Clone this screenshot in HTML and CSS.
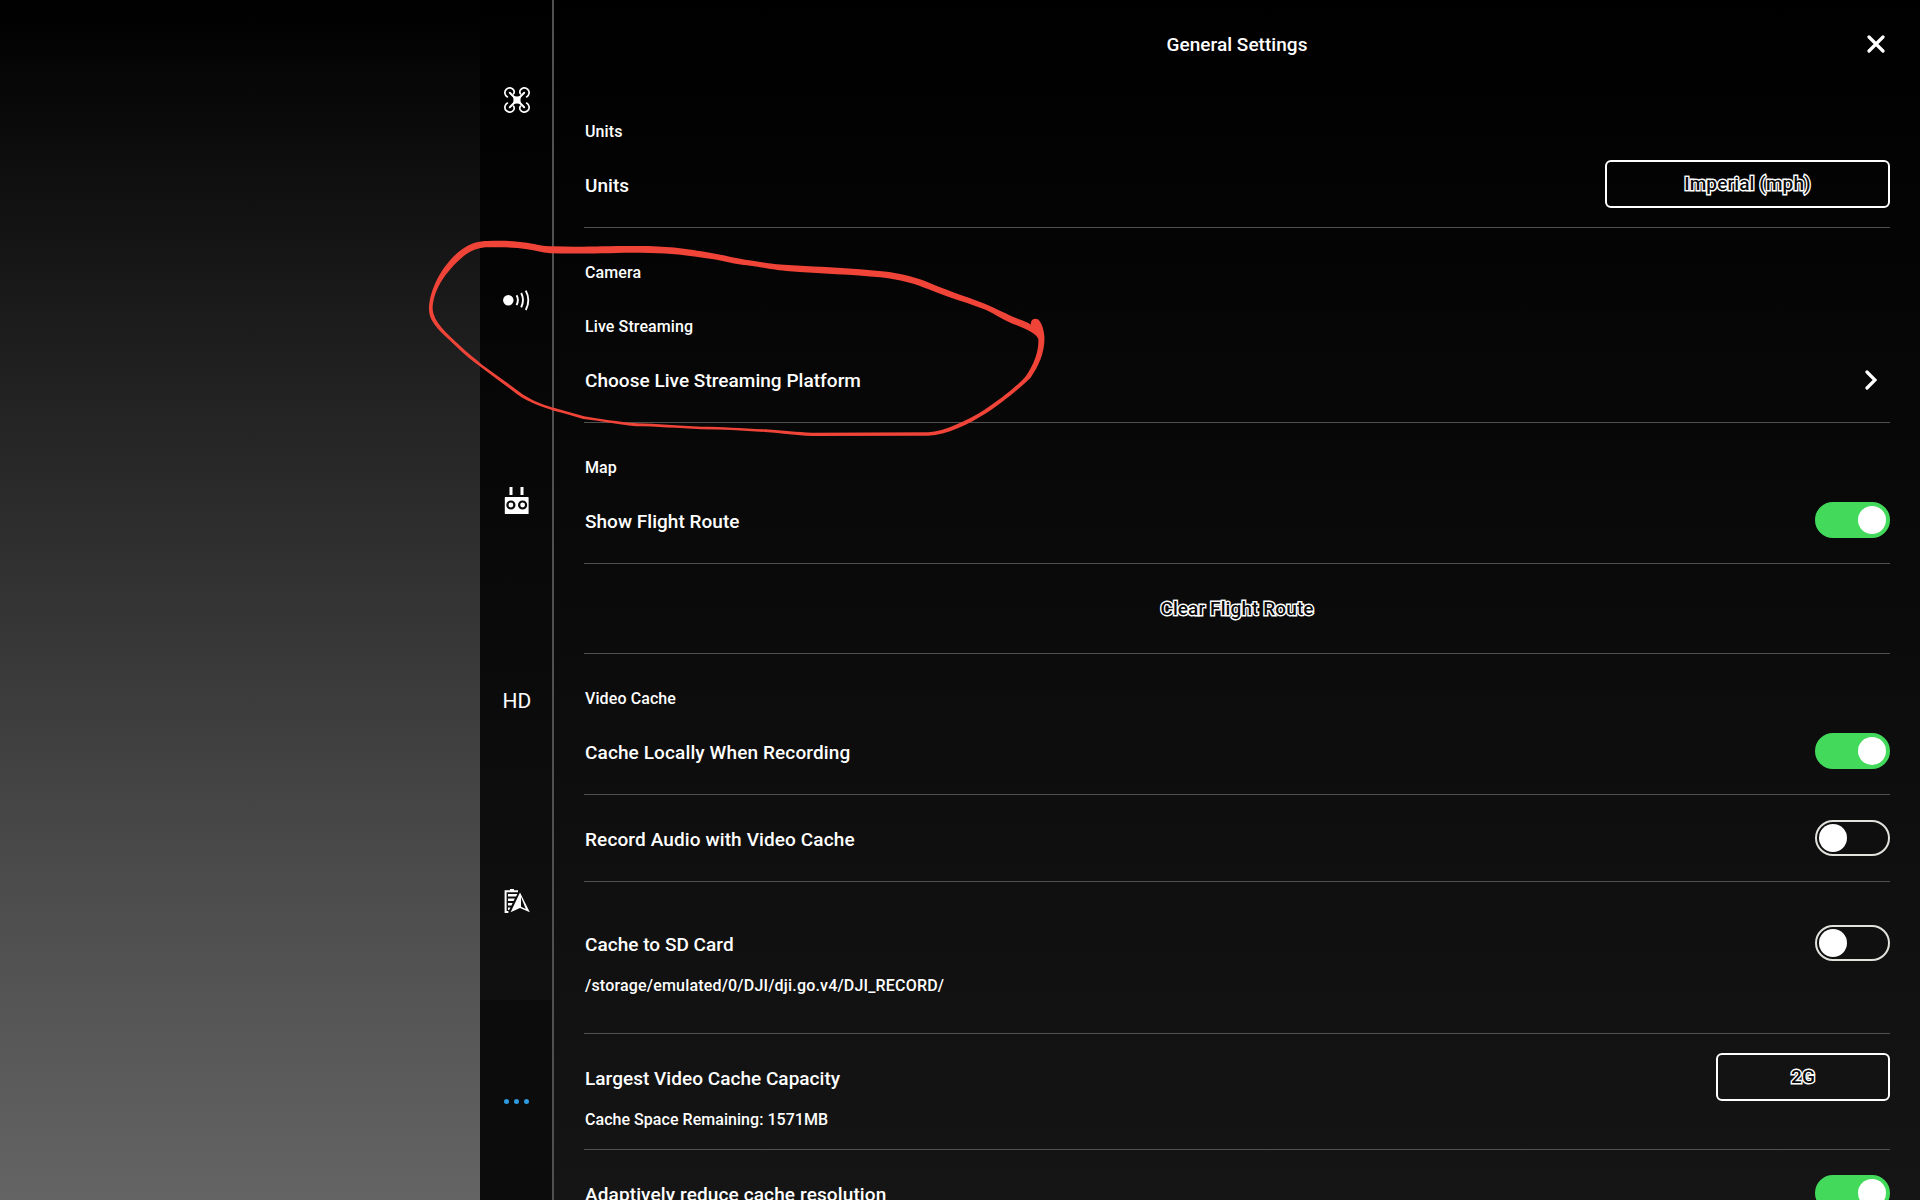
FILE: index.html
```
<!DOCTYPE html>
<html lang="en">
<head>
    <meta charset="UTF-8">
    <title>General Settings</title>
    <link rel="stylesheet" href="styles.css">
</head>
<body>
    <div id="container">
        <ul id="tab">
            <li>
                <svg width="28" height="28" viewBox="0 0 28 28">
                    <g fill="none" stroke="#fff" stroke-width="1.7" stroke-linecap="round">
                        <path d="M4.400 10.900A4.800 4.800 0 1 1 10.900 4.400Q11.600 6.600 10.600 7.800M17.400 7.800Q16.400 6.600 17.100 4.400A4.800 4.800 0 1 1 23.600 10.900M10.600 20.200Q11.600 21.400 10.900 23.600A4.800 4.800 0 1 1 4.400 17.100M23.600 17.100A4.800 4.800 0 1 1 17.100 23.600Q16.400 21.400 17.400 20.200"/>
                        <path d="M6.800 6.800L21.200 21.200M21.200 6.800L6.800 21.200" stroke-width="2"/>
                    </g>
                    <path d="M9.500 9.500Q14 11.500 18.500 9.500Q16.500 14 18.500 18.500Q14 16.500 9.500 18.500Q11.500 14 9.500 9.500Z" fill="#fff"/>
                </svg>
            </li>
            <li>
                <svg width="28" height="28" viewBox="0 0 28 28">
                    <circle cx="5.3" cy="14.3" r="5.2" fill="#fff"/>
                    <path d="M13.6 9.2Q16.2 14 13.6 19.2M18.2 7Q21.8 14 18.2 21.4M22.8 4.6Q27.8 14 22.8 24" fill="none" stroke="#fff" stroke-width="1.9"/>
                </svg>
            </li>
            <li>
                <svg width="28" height="28" viewBox="0 0 28 28">
                    <path d="M6.500 1h3v8h-3zM17.500 1h3v8h-3zM2.400 11h22.600q.6 0 .6.6v15.800q0 .6-.6.6H2.400q-.6 0-.6-.6V11.600q0-.6.6-.6z" fill="#fff"/>
                    <circle cx="7.900" cy="19" r="3.500" fill="#fff" stroke="#090909" stroke-width="2.200"/>
                    <circle cx="19.600" cy="19" r="3.500" fill="#fff" stroke="#090909" stroke-width="2.200"/>
                </svg>
            </li>
            <li class="hd">HD</li>
            <li>
                <svg width="28" height="28" viewBox="0 0 28 28">
                    <path d="M5.400 26H2.600V5.200H15" fill="none" stroke="#fff" stroke-width="2"/>
                    <path d="M7 3h4v3H7zM5 8h9.400l-1.400 2.600H5zM5 12.500h6.800l-1.200 2.600H5zM5 17h4.600l-1.200 2.600H5zM5 21.500h2.400l-1.200 2.400H5z" fill="#fff"/>
                    <path d="M17 6.500L7.600 26.200l9.400-4.200 9.800 4.200z" fill="#fff"/>
                    <path d="M18 11v9.700l4.800 2.300z" fill="#0f0f0f"/>
                </svg>
            </li>
            <li class="selected">
                <i></i><i></i><i></i>
            </li>
        </ul>
        <div id="panel">
            <div class="header">
                <h1>General Settings</h1>
                <svg class="close" width="18" height="18" viewBox="0 0 18 18">
                    <path d="M2 2L16 16M16 2L2 16" stroke="#fff" stroke-width="3.200" stroke-linecap="round"/>
                </svg>
            </div>

            <h2>Units</h2>
            <div class="row">
                <span class="name">Units</span>
                <span class="select wide">Imperial (mph)</span>
            </div>

            <h2>Camera</h2>
            <h2>Live Streaming</h2>
            <div class="row">
                <span class="name">Choose Live Streaming Platform</span>
                <svg class="arrow" width="12" height="20" viewBox="0 0 12 20">
                    <path d="M2 2L10 10L2 18" fill="none" stroke="#fff" stroke-width="3.200" stroke-linecap="round"/>
                </svg>
            </div>

            <h2>Map</h2>
            <div class="row">
                <span class="name">Show Flight Route</span>
                <span class="switch on"></span>
            </div>
            <div class="row clear">
                <span class="outline">Clear Flight Route</span>
            </div>

            <h2>Video Cache</h2>
            <div class="row">
                <span class="name loose">Cache Locally When Recording</span>
                <span class="switch on"></span>
            </div>
            <div class="row">
                <span class="name loose">Record Audio with Video Cache</span>
                <span class="switch"></span>
            </div>
            <div class="row sd">
                <div class="text">
                    <span class="name">Cache to SD Card</span>
                    <span class="info path">/storage/emulated/0/DJI/dji.go.v4/DJI_RECORD/</span>
                </div>
                <span class="switch"></span>
            </div>
            <div class="row capacity">
                <div class="text">
                    <span class="name">Largest Video Cache Capacity</span>
                    <span class="info">Cache Space Remaining: 1571MB</span>
                </div>
                <span class="select">2G</span>
            </div>
            <div class="row">
                <span class="name loose">Adaptively reduce cache resolution</span>
                <span class="switch on"></span>
            </div>
        </div>
        <!-- hand drawn circle round the live streaming row -->
        <svg id="mark" width="640" height="230" viewBox="0 0 1568 690" preserveAspectRatio="none">
            <path fill="#f04438" fill-rule="evenodd" d="M22,268 C22,215 50,140 98,92 C125,68 145,63 165,63 C205,61 235,63 262,68 C290,74 300,78 325,79 C395,82 450,78 520,78 C600,77 640,84 700,96 C740,104 770,114 797,119 C850,128 860,132 902,135 C990,141 1060,145 1132,154 C1180,160 1220,174 1253,191 C1300,215 1355,236 1395,257 C1430,276 1450,290 1475,301 C1485,306 1492,310 1497,314 C1494,300 1505,292 1514,298 C1524,308 1530,335 1530,355 C1530,400 1515,440 1496,473 C1475,500 1425,548 1388,579 C1345,612 1290,646 1245,647 L960,648 C920,646 890,640 845,636 C790,632 740,628 690,628 C630,625 580,619 530,619 C480,613 440,602 400,597 C375,588 350,578 328,572 C300,562 280,552 262,541 C240,527 222,506 202,490 L148,440 C130,424 110,404 92,383 C60,345 22,312 22,268Z
            M31,268 C33,305 65,340 98,377 C115,398 135,415 152,434 L208,484 C228,500 245,520 267,534 C288,548 305,556 332,565 C355,573 378,581 402,589 C440,596 485,606 532,610 C580,611 630,617 690,620 C740,620 790,625 847,628 C890,632 925,637 960,638 L1245,637 C1285,635 1340,602 1381,571 C1420,540 1465,497 1485,467 C1505,430 1516,395 1515,358 C1510,340 1485,328 1462,316 C1430,302 1410,283 1387,270 C1350,252 1300,235 1246,208 C1215,193 1180,179 1128,172 C1060,164 985,161 898,153 C855,148 845,142 793,135 C760,130 735,119 697,114 C640,103 600,98 520,98 C450,99 395,102 320,100 C298,98 280,90 258,87 C235,82 205,81 160,82 C140,85 125,92 111,104 C60,155 31,215 31,268Z"/>
        </svg>
    </div>
</body>
</html>
```
FILE: styles.css
```
*{
    padding: 0;
    margin: 0;
    box-sizing: border-box;
}
body{
    font-family: Roboto, "Liberation Sans", sans-serif;
    font-weight: 500;
    color: #ffffff;
    background: #000000;
}
#container{
    position: relative;
    display: flex;
    height: 1200px;
    padding-left: 480px;
    overflow: hidden;
    background: linear-gradient(#000000 0, #0a0a0a 120px, #202020 370px, #373737 640px, #4a4a4a 860px, #646464 1200px);
}
#tab{
    width: 74px;
    height: 1200px;
    border-right: 2px solid #505050;
    list-style: none;
    background: linear-gradient(#000000, #131313);
}
#tab li{
    height: 200px;
    display: flex;
    justify-content: center;
    align-items: center;
    padding-left: 2px;
}
#tab svg{
    display: block;
}
#tab .hd{
    font-size: 21px;
    font-weight: 450;
    padding-top: 1px;
}
#tab li.selected{
    gap: 5px;
    padding: 3px 0 0 0;
    background: #0c0c0c;
}
#tab i{
    width: 5px;
    height: 5px;
    border-radius: 50%;
    background: #2f9be0;
}
#panel{
    flex: 1;
    height: 1200px;
    padding: 0 30px;
    overflow: hidden;
    background: linear-gradient(#000000, #151515);
}
.header{
    height: 87px;
    display: grid;
    grid-template-columns: 1fr auto 1fr;
    align-items: center;
}
h1{
    grid-column: 2;
    padding-top: 2px;
    font-size: 19px;
    font-weight: 500;
    letter-spacing: 0.04px;
}
.close{
    justify-self: end;
    margin-right: 5px;
}
h2{
    height: 54px;
    padding: 35px 0 0 1px;
    font-size: 16px;
    font-weight: 500;
    line-height: 19px;
    letter-spacing: 0.1px;
}
.row{
    height: 87px;
    display: flex;
    justify-content: space-between;
    align-items: center;
    border-bottom: 1px solid #505050;
}
.name{
    padding: 3px 0 0 1px;
    font-size: 19px;
    line-height: 24px;
    letter-spacing: 0.03px;
}
.loose{
    letter-spacing: 0.12px;
}
.info{
    padding-left: 1px;
    font-size: 16px;
    line-height: 20px;
    letter-spacing: 0.04px;
}
.path{
    letter-spacing: 0.18px;
}
.text{
    display: flex;
    flex-direction: column;
    gap: 19px;
}
.arrow{
    margin: 2px 13px 0 0;
}
.clear{
    height: 90px;
    justify-content: center;
}
.sd{
    height: 152px;
    padding-top: 43px;
    align-items: flex-start;
}
.capacity{
    height: 116px;
    padding-top: 19px;
    align-items: flex-start;
}
.sd .text{
    padding-top: 5px;
}
.capacity .text{
    padding-top: 11px;
}
.select{
    width: 174px;
    height: 48px;
    border: 2px solid #ffffff;
    border-radius: 6px;
    line-height: 43px;
    text-align: center;
}
.wide{
    width: 285px;
}
.select,.outline{
    font-size: 19px;
    letter-spacing: 0.1px;
    color: #0a0a0a;
    -webkit-text-stroke: 2.8px #ffffff;
    paint-order: stroke fill;
}
.switch{
    display: flex;
    width: 75px;
    height: 36px;
    padding: 2px;
    border: 2px solid #e2e2dc;
    border-radius: 18px;
}
.switch:before{
    content: "";
    width: 28px;
    height: 28px;
    border-radius: 50%;
    background: #ffffff;
}
.switch.on{
    justify-content: flex-end;
    border-color: #43da5c;
    background: #43da5c;
}
#mark{
    position: absolute;
    left: 420px;
    top: 220px;
}
```
